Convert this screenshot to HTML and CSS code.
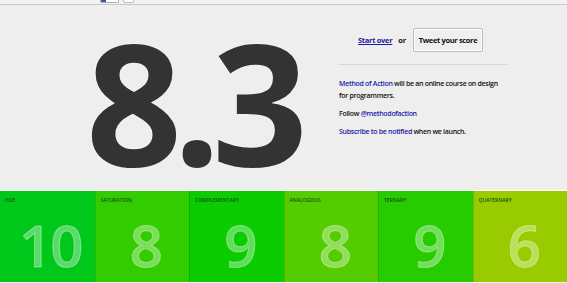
FILE: index.html
```html
<!DOCTYPE html>
<html lang="en">

<head>
  <meta charset="utf-8" />
  <title>Your score</title>
  <link rel="stylesheet" href="styles.css">
</head>

<body>
  <div class="topbar">
    <span class="widget widget-fb"></span>
    <span class="widget widget-tw"></span>
  </div>

  <div class="main">
    <div class="score">8.3</div>
    <div class="side">
      <p class="actions">
        <a href="#" class="restart">Start over</a>
        <span class="or">or</span>
        <button class="tweet">Tweet your score</button>
      </p>
      <hr />
      <p><a href="#">Method of Action</a> will be an online course on design<br />for programmers.</p>
      <p>Follow <a href="#">@methodofaction</a></p>
      <p><a href="#">Subscribe to be notified</a> when we launch.</p>
    </div>
  </div>

  <div class="results">
    <div class="cell hue"><span class="label">HUE</span><span class="num">10</span></div>
    <div class="cell saturation"><span class="label">SATURATION</span><span class="num">8</span></div>
    <div class="cell complementary"><span class="label">COMPLEMENTARY</span><span class="num">9</span></div>
    <div class="cell analogous"><span class="label">ANALOGOUS</span><span class="num">8</span></div>
    <div class="cell ternary"><span class="label">TERNARY</span><span class="num">9</span></div>
    <div class="cell quaternary"><span class="label">QUATERNARY</span><span class="num">6</span></div>
  </div>
</body>

</html>
```

FILE: styles.css
```css
*{margin:0;padding:0;box-sizing:border-box;}
body{background:#eee;font-family:"Open Sans","Noto Sans",sans-serif;color:#111;overflow:hidden;}
a{color:#1a1aa6;text-decoration:none;}

.topbar{height:5px;border-bottom:1px solid #c8c8c8;background:#f2f2f2;padding-left:100px;display:flex;gap:4px;}
.widget{display:block;height:3px;border:1px solid #bbb;border-top:none;border-radius:0 0 2px 2px;background:#fff;}
.widget-fb{width:19px;border-color:#aab;background:linear-gradient(90deg,#3b5998 0 5px,#fff 5px);}
.widget-tw{width:11px;}

.main{display:flex;height:185px;padding-left:86px;}
.score{font-size:168px;font-weight:700;color:#333;letter-spacing:-9px;line-height:1;margin-top:12px;text-shadow:0 0 2px #fff;}
.side{margin-left:40px;padding-top:23px;width:175px;font-size:7px;font-weight:600;letter-spacing:-.3px;}
.side p{margin-bottom:6px;line-height:12px;}
.side .actions{display:flex;align-items:center;padding-left:19px;gap:6px;margin-bottom:12px;font-size:7.5px;}
.side .restart{text-decoration:underline;font-weight:700;}
.side .or{font-weight:700;margin-right:1px;}
.tweet{font:inherit;font-weight:700;letter-spacing:-.35px;color:#111;background:#efefef;border:1px solid #bbb;box-shadow:inset 0 0 0 1px #fff;border-radius:2px;padding:0 5px;height:24px;}
.side hr{border:none;border-top:1px solid #d6d6d6;margin-bottom:13px;width:168px;}

.results{display:grid;grid-template-columns:repeat(6,1fr);border-top:1px solid #fff;height:92px;}
.cell{display:flex;flex-direction:column;align-items:center;border-left:1px solid rgba(0,0,0,.12);padding-top:6px;}
.cell:first-child{border-left:none;}
.label{align-self:flex-start;padding-left:5px;font-size:5px;line-height:6px;color:#145214;font-weight:600;}
.num{font-size:58px;line-height:76px;margin-top:4px;padding-left:6px;color:rgba(255,255,255,.35);-webkit-text-stroke:1px rgba(255,255,255,.35);font-weight:600;letter-spacing:-2px;}
.hue{background:#00c81a;}
.saturation{background:#33cc00;}
.complementary{background:#0acc00;}
.analogous{background:#55cc00;}
.ternary{background:#27cc00;}
.quaternary{background:#99cc00;}
```
